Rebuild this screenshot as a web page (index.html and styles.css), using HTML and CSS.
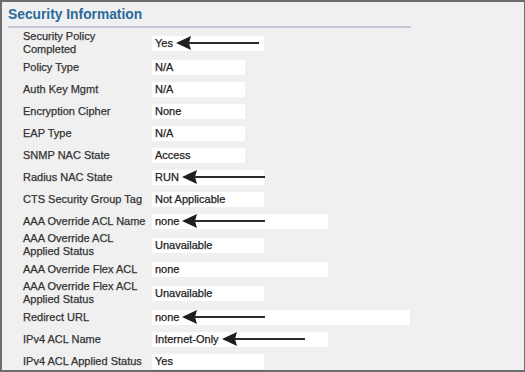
FILE: index.html
```html
<!DOCTYPE html>
<html lang="en">
<head>
    <meta charset="UTF-8">
    <title>Security Information</title>
    <link rel="stylesheet" href="styles.css">
</head>
<body>
    <svg class="defs" width="0" height="0">
        <symbol id="arrow" viewBox="0 0 83 14">
            <polygon points="0,7 15,0 13,7 15,14" fill="#1f1f1f"/>
            <rect x="12" y="6" width="71" height="2" fill="#2a2a2a"/>
        </symbol>
    </svg>

    <div class="panel">
        <h2 class="title">Security Information</h2>

        <div class="rows">
            <div class="row">
                <div class="label">Security Policy<br>Completed</div>
                <div class="value w-md">Yes<svg class="arrow"><use href="#arrow"/></svg></div>
            </div>
            <div class="row">
                <div class="label">Policy Type</div>
                <div class="value w-sm">N/A</div>
            </div>
            <div class="row">
                <div class="label">Auth Key Mgmt</div>
                <div class="value w-sm">N/A</div>
            </div>
            <div class="row">
                <div class="label">Encryption Cipher</div>
                <div class="value w-sm">None</div>
            </div>
            <div class="row">
                <div class="label">EAP Type</div>
                <div class="value w-sm">N/A</div>
            </div>
            <div class="row">
                <div class="label">SNMP NAC State</div>
                <div class="value w-sm">Access</div>
            </div>
            <div class="row">
                <div class="label">Radius NAC State</div>
                <div class="value w-md">RUN<svg class="arrow"><use href="#arrow"/></svg></div>
            </div>
            <div class="row">
                <div class="label">CTS Security Group Tag</div>
                <div class="value w-md">Not Applicable</div>
            </div>
            <div class="row">
                <div class="label">AAA Override ACL Name</div>
                <div class="value w-lg">none<svg class="arrow"><use href="#arrow"/></svg></div>
            </div>
            <div class="row">
                <div class="label">AAA Override ACL<br>Applied Status</div>
                <div class="value w-md">Unavailable</div>
            </div>
            <div class="row">
                <div class="label">AAA Override Flex ACL</div>
                <div class="value w-lg">none</div>
            </div>
            <div class="row">
                <div class="label">AAA Override Flex ACL<br>Applied Status</div>
                <div class="value w-md">Unavailable</div>
            </div>
            <div class="row">
                <div class="label">Redirect URL</div>
                <div class="value w-xl">none<svg class="arrow"><use href="#arrow"/></svg></div>
            </div>
            <div class="row">
                <div class="label">IPv4 ACL Name</div>
                <div class="value w-lg">Internet-Only<svg class="arrow"><use href="#arrow"/></svg></div>
            </div>
            <div class="row">
                <div class="label">IPv4 ACL Applied Status</div>
                <div class="value w-md">Yes</div>
            </div>
        </div>
    </div>
</body>
</html>
```

FILE: styles.css
```css
body {
    margin: 0;
    padding: 0;
    font-family: 'Liberation Sans', Arial, sans-serif;
    background-color: #f0f0f0;
}
.defs {
    position: absolute;
}
.panel {
    box-sizing: border-box;
    width: 525px;
    height: 372px;
    overflow: hidden;
    border: 2px solid #6c6c6c;
    border-right-width: 1px;
    background-color: #f0f0f0;
}
.title {
    width: 403px;
    margin: 5px 0 0 6px;
    padding-bottom: 3px;
    border-bottom: 2px solid #c6c8d9;
    font-size: 13.8px;
    line-height: 16px;
    font-weight: bold;
    color: #2b6a9a;
}
.rows {
    padding: 2px 0 0 21px;
}
.row {
    display: flex;
    align-items: center;
    min-height: 22px;
}
.label {
    width: 129px;
    font-size: 11px;
    line-height: 13px;
    color: #333;
    -webkit-text-stroke: 0.25px #333;
}
.value {
    display: flex;
    align-items: center;
    box-sizing: border-box;
    height: 15px;
    padding-left: 3px;
    background-color: #fff;
    font-size: 11px;
    color: #222;
    -webkit-text-stroke: 0.25px #222;
}
.w-sm { width: 93px; }
.w-md { width: 112px; }
.w-lg { width: 176px; }
.w-xl { width: 258px; }
.arrow {
    width: 83px;
    height: 14px;
    margin-left: 3px;
    flex-shrink: 0;
}
```
